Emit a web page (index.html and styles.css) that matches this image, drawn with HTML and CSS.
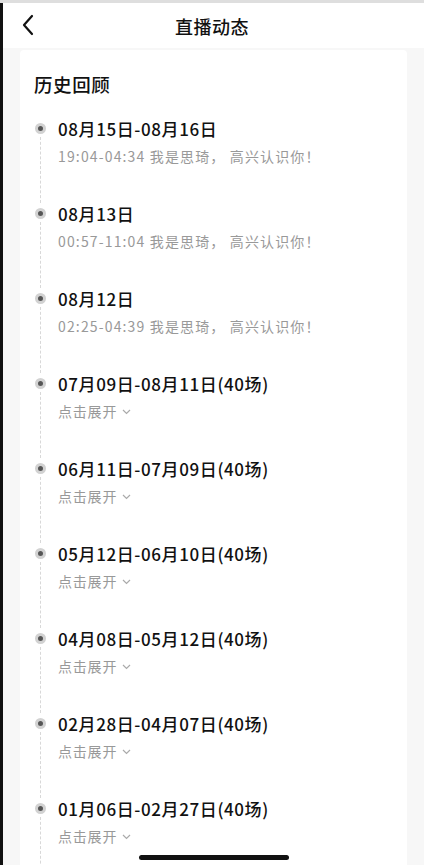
FILE: index.html
```html
<!DOCTYPE html>
<html lang="zh">
<head>
<meta charset="utf-8">
<title>直播动态</title>
<link rel="stylesheet" href="styles.css">
</head>
<body>
<div class="screen">
  <div class="app">
    <header class="header">
      <svg class="back" width="14" height="22" viewBox="0 0 14 22"><polyline points="11,2 3,11 11,20" fill="none" stroke="#111" stroke-width="2.2" stroke-linecap="round" stroke-linejoin="round"/></svg>
      <h1 class="title">直播动态</h1>
    </header>
    <main class="content">
      <section class="card">
        <h2 class="heading">历史回顾</h2>
        <ul class="list">
          <li class="item"><div class="rail"><span class="dot"></span><span class="line"></span></div><div class="body"><div class="date">08月15日-08月16日</div><div class="sub">19:04-04:34 我是思琦， 高兴认识你！</div></div></li>
          <li class="item"><div class="rail"><span class="dot"></span><span class="line"></span></div><div class="body"><div class="date">08月13日</div><div class="sub">00:57-11:04 我是思琦， 高兴认识你！</div></div></li>
          <li class="item"><div class="rail"><span class="dot"></span><span class="line"></span></div><div class="body"><div class="date">08月12日</div><div class="sub">02:25-04:39 我是思琦， 高兴认识你！</div></div></li>
          <li class="item"><div class="rail"><span class="dot"></span><span class="line"></span></div><div class="body"><div class="date">07月09日-08月11日(40场)</div><div class="sub expand">点击展开<svg class="chev" width="9" height="6" viewBox="0 0 9 6"><polyline points="1,1 4.5,4.5 8,1" fill="none" stroke="#aaa" stroke-width="1.2"/></svg></div></div></li>
          <li class="item"><div class="rail"><span class="dot"></span><span class="line"></span></div><div class="body"><div class="date">06月11日-07月09日(40场)</div><div class="sub expand">点击展开<svg class="chev" width="9" height="6" viewBox="0 0 9 6"><polyline points="1,1 4.5,4.5 8,1" fill="none" stroke="#aaa" stroke-width="1.2"/></svg></div></div></li>
          <li class="item"><div class="rail"><span class="dot"></span><span class="line"></span></div><div class="body"><div class="date">05月12日-06月10日(40场)</div><div class="sub expand">点击展开<svg class="chev" width="9" height="6" viewBox="0 0 9 6"><polyline points="1,1 4.5,4.5 8,1" fill="none" stroke="#aaa" stroke-width="1.2"/></svg></div></div></li>
          <li class="item"><div class="rail"><span class="dot"></span><span class="line"></span></div><div class="body"><div class="date">04月08日-05月12日(40场)</div><div class="sub expand">点击展开<svg class="chev" width="9" height="6" viewBox="0 0 9 6"><polyline points="1,1 4.5,4.5 8,1" fill="none" stroke="#aaa" stroke-width="1.2"/></svg></div></div></li>
          <li class="item"><div class="rail"><span class="dot"></span><span class="line"></span></div><div class="body"><div class="date">02月28日-04月07日(40场)</div><div class="sub expand">点击展开<svg class="chev" width="9" height="6" viewBox="0 0 9 6"><polyline points="1,1 4.5,4.5 8,1" fill="none" stroke="#aaa" stroke-width="1.2"/></svg></div></div></li>
          <li class="item"><div class="rail"><span class="dot"></span><span class="line"></span></div><div class="body"><div class="date">01月06日-02月27日(40场)</div><div class="sub expand">点击展开<svg class="chev" width="9" height="6" viewBox="0 0 9 6"><polyline points="1,1 4.5,4.5 8,1" fill="none" stroke="#aaa" stroke-width="1.2"/></svg></div></div></li>
        </ul>
      </section>
    </main>
    <div class="home-indicator"></div>
  </div>
</div>
</body>
</html>
```
FILE: styles.css
```css
html, body {
  margin: 0;
  padding: 0;
  height: 100%;
  overflow: hidden;
}
body {
  font-family: "Noto Sans CJK SC", "Noto Sans", sans-serif;
  color: #111;
  background: #f7f7f7;
}
.screen {
  height: 865px;
  border-top: 3px solid #dedede;
  box-sizing: border-box;
  overflow: hidden;
}
.app {
  height: 100%;
  border-left: 3px solid #111;
  background: #f7f7f7;
  display: flex;
  flex-direction: column;
}
.header {
  height: 45px;
  flex: none;
  background: #fff;
  display: flex;
  align-items: center;
  justify-content: center;
  position: relative;
}
.back {
  position: absolute;
  left: 18px;
  top: 11px;
}
.title {
  margin: 0 0 0 -3px;
  font-size: 18px;
  font-weight: 500;
  line-height: 24px;
  letter-spacing: 0.5px;
}
.content {
  flex: 1;
  padding: 2px 17px 0 17px;
  display: flex;
  flex-direction: column;
}
.card {
  flex: 1;
  background: #fff;
  border-radius: 4px 4px 0 0;
  padding-top: 22px;
}
.heading {
  margin: 0 0 21px 14px;
  font-size: 18.5px;
  font-weight: 500;
  line-height: 25px;
  letter-spacing: 0.6px;
}
.list {
  list-style: none;
  margin: 0;
  padding: 0;
}
.item {
  display: flex;
  height: 85px;
}
.rail {
  width: 11px;
  margin-left: 15px;
  margin-right: 12px;
  display: flex;
  flex-direction: column;
  align-items: center;
}
.dot {
  flex: none;
  width: 11px;
  height: 11px;
  margin-top: 5px;
  box-sizing: border-box;
  border-radius: 50%;
  background: #555;
  border: 3px solid #d2d2d2;
}
.line {
  flex: 1;
  width: 0;
  border-left: 1px dashed #d8d8d8;
  margin-top: 3px;
}
.body {
  flex: 1;
}
.date {
  font-size: 17px;
  font-weight: 500;
  line-height: 22px;
  letter-spacing: 0.6px;
  color: #111;
}
.sub {
  margin-top: 7px;
  font-size: 14px;
  line-height: 18px;
  letter-spacing: 1.15px;
  color: #999;
  display: flex;
  align-items: center;
}
.expand {
  letter-spacing: 0.8px;
}
.chev {
  margin-left: 5px;
  margin-top: 1px;
}
.home-indicator {
  position: absolute;
  left: 139px;
  top: 855px;
  width: 150px;
  height: 5px;
  border-radius: 3px;
  background: #111;
}
```
